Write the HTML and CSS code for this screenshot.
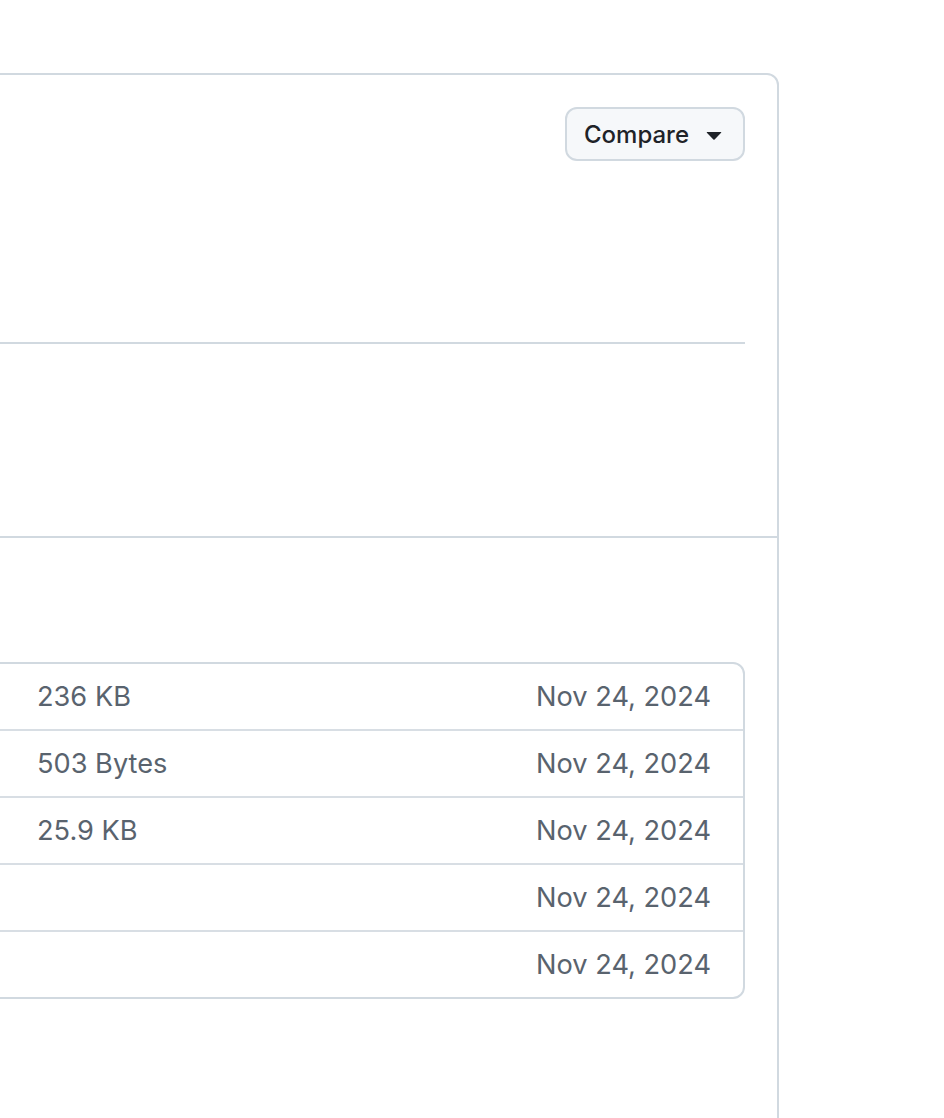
FILE: index.html
```html
<!DOCTYPE html>
<html lang="en">
<head>
<meta charset="utf-8">
<title>Release</title>
<link rel="stylesheet" href="styles.css">
</head>
<body>
<div class="page">
  <div class="release">
    <div class="release-head">
      <div class="head-top">
        <button class="btn-compare">Compare <svg class="caret" viewBox="0 0 16 16"><path d="M4.427 7.427l3.396 3.396a.25.25 0 0 0 .354 0l3.396-3.396A.25.25 0 0 0 11.396 7H4.604a.25.25 0 0 0-.177.427Z" fill="currentColor"/></svg></button>
      </div>
    </div>
    <div class="release-body"></div>
    <div class="release-assets">
      <div class="assets-title"></div>
      <ul class="assets">
        <li class="asset"><span class="name"></span><span class="size">236 KB</span><span class="date">Nov 24, 2024</span></li>
        <li class="asset"><span class="name"></span><span class="size">503 Bytes</span><span class="date">Nov 24, 2024</span></li>
        <li class="asset"><span class="name"></span><span class="size">25.9 KB</span><span class="date">Nov 24, 2024</span></li>
        <li class="asset"><span class="name"></span><span class="size"></span><span class="date">Nov 24, 2024</span></li>
        <li class="asset"><span class="name"></span><span class="size"></span><span class="date">Nov 24, 2024</span></li>
      </ul>
    </div>
  </div>
</div>
</body>
</html>
```
FILE: styles.css
```css
* { box-sizing: border-box; }
html, body { margin: 0; padding: 0; background: #fff; }
body {
  font-family: Inter, "Liberation Sans", sans-serif;
  color: #1f2328;
  overflow: hidden;
  height: 1118px;
}
.page {
  padding-top: 73px;
  margin-left: -400px;
  width: 1179px;
}
.release {
  border: 2px solid #d1d9e0;
  border-radius: 12px;
  height: 1200px;
}
.release-head {
  padding: 32px 32px 0 32px;
}
.head-top {
  display: flex;
  justify-content: flex-end;
  align-items: flex-start;
  height: 237px;
  border-bottom: 2px solid #d1d9e0;
}
.btn-compare {
  display: flex;
  align-items: center;
  height: 54px;
  width: 180px;
  padding: 0 0 0 17px;
  background: #f6f8fa;
  border: 2px solid #d1d9e0;
  border-radius: 12px;
  font-family: inherit;
  font-size: 24px;
  font-weight: 500;
  color: #1f2328;
}
.caret { width: 32px; height: 32px; flex-shrink: 0; margin-left: 9px; }
.release-body {
  height: 194px;
  border-bottom: 2px solid #d1d9e0;
}
.release-assets {
  padding: 0 32px;
}
.assets-title { height: 124px; }
.assets {
  list-style: none;
  margin: 0;
  padding: 0;
  border: 2px solid #d1d9e0;
  border-radius: 12px;
}
.asset {
  display: flex;
  align-items: center;
  height: 67px;
  padding: 0 32px;
  border-top: 2px solid #d8dee4;
  font-size: 27.2px;
  color: #59636e;
}
.asset:first-child { border-top: 0; height: 65px; }
.name { flex: 0 0 369px; }
.size { flex: 1; }
.date { text-align: right; }
```
